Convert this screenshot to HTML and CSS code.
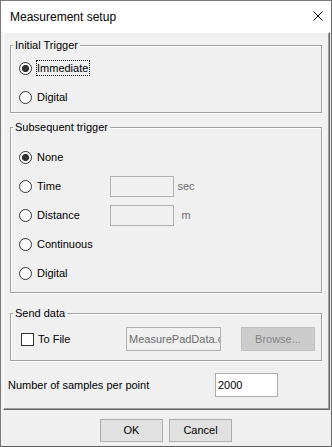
FILE: index.html
```html
<!DOCTYPE html>
<html>
<head>
<meta charset="utf-8">
<link rel="stylesheet" href="styles.css">
</head>
<body>
<div class="window">
  <div class="titlebar">
    <span class="title">Measurement setup</span>
    <svg class="close" width="10" height="10" viewBox="0 0 10 10"><path d="M0.5 0.5 L9.5 9.5 M9.5 0.5 L0.5 9.5" stroke="#000" stroke-width="1" fill="none"/></svg>
  </div>
  <div class="panel">
    <div class="group g-initial">
      <span class="group-title">Initial Trigger</span>
      <div class="row"><input type="radio" class="radio" name="init" checked><span class="lbl focus">Immediate</span></div>
      <div class="row"><input type="radio" class="radio" name="init"><span class="lbl">Digital</span></div>
    </div>
    <div class="group g-subsequent">
      <span class="group-title">Subsequent trigger</span>
      <div class="row"><input type="radio" class="radio" name="sub" checked><span class="lbl">None</span></div>
      <div class="row"><input type="radio" class="radio" name="sub"><span class="lbl lbl-fixed">Time</span><span class="tbox"></span><span class="unit">sec</span></div>
      <div class="row"><input type="radio" class="radio" name="sub"><span class="lbl lbl-fixed">Distance</span><span class="tbox"></span><span class="unit">m</span></div>
      <div class="row"><input type="radio" class="radio" name="sub"><span class="lbl">Continuous</span></div>
      <div class="row"><input type="radio" class="radio" name="sub"><span class="lbl">Digital</span></div>
    </div>
    <div class="group g-send">
      <span class="group-title">Send data</span>
      <div class="row row-send">
        <input type="checkbox" class="check"><span class="lbl lbl-file">To File</span>
        <span class="filebox">MeasurePadData.csv</span>
        <span class="browse">Browse...</span>
      </div>
    </div>
    <div class="samples">
      <span class="samples-lbl">Number of samples per point</span>
      <span class="samples-box">2000</span>
    </div>
  </div>
  <div class="buttons">
    <span class="btn">OK</span>
    <span class="btn">Cancel</span>
  </div>
</div>
</body>
</html>
```
FILE: styles.css
```css
html, body {
  margin: 0;
  padding: 0;
  background: #f0f0f0;
}
body {
  font-family: "Liberation Sans", Arial, sans-serif;
  font-size: 11px;
  color: #000;
}
.window {
  width: 332px;
  height: 447px;
  box-sizing: border-box;
  border: 1px solid #7a7a7a;
  border-bottom-color: #5e5e5e;
  border-right-color: #6a6a6a;
  background: #f0f0f0;
  display: flex;
  flex-direction: column;
}
.titlebar {
  height: 31px;
  flex: none;
  background: #fff;
  display: flex;
  align-items: center;
  justify-content: space-between;
  padding: 0 8px 0 9px;
}
.title {
  font-size: 12px;
  color: #000;
}
.close {
  display: block;
  margin-top: -2px;
}
.panel {
  flex: none;
  height: 378px;
  box-sizing: border-box;
  margin: 0 1px 0 2px;
  border-top: 1px solid #fff;
  border-left: 1px solid #fff;
  border-right: 1px solid #646464;
  border-bottom: 1px solid #646464;
  box-shadow: inset -1px -1px 0 #a0a0a0;
  display: flex;
  flex-direction: column;
}
.group {
  position: relative;
  margin: 0 7px 0 6px;
  border: 1px solid #a0a0a0;
  box-shadow: inset 1px 1px 0 #fff, 1px 1px 0 #fff;
  padding: 0 0 0 8px;
  display: flex;
  flex-direction: column;
  gap: 9px;
}
.group-title {
  position: absolute;
  top: -7px;
  left: 2px;
  line-height: 13px;
  padding: 0 2px;
  background: #f0f0f0;
}
.g-initial {
  margin-top: 12px;
  padding-top: 12px;
  padding-bottom: 5px;
}
.g-subsequent {
  margin-top: 14px;
  padding-top: 19px;
  padding-bottom: 9px;
}
.g-send {
  margin-top: 20px;
  padding-top: 13px;
  padding-bottom: 9px;
}
.row {
  height: 20px;
  display: flex;
  align-items: center;
}
.radio {
  -webkit-appearance: none;
  appearance: none;
  width: 13px;
  height: 13px;
  margin: 0;
  box-sizing: border-box;
  border: 1px solid #333;
  border-radius: 50%;
  background: #fff;
  flex: none;
}
.radio:checked {
  background: radial-gradient(circle, #333 0 3.3px, #fff 3.9px);
}
.lbl {
  margin-left: 5px;
  line-height: 14px;
}
.focus {
  outline: 1px dotted #000;
  outline-offset: 0;
  padding-right: 1px;
}
.lbl-fixed {
  width: 73px;
}
.tbox {
  width: 64px;
  height: 21px;
  box-sizing: border-box;
  border: 1px solid #b0b0b0;
  background: #f0f0f0;
  margin-top: 1px;
}
.unit {
  width: 20px;
  margin-left: 2px;
  text-align: center;
  color: #6d6d6d;
}
.row-send {
  height: 24px;
}
.check {
  -webkit-appearance: none;
  appearance: none;
  width: 13px;
  height: 13px;
  margin: 0 0 0 2px;
  box-sizing: border-box;
  border: 1px solid #333;
  background: #fff;
  flex: none;
}
.lbl-file {
  margin-left: 4px;
  width: 88px;
}
.filebox {
  width: 95px;
  height: 24px;
  box-sizing: border-box;
  border: 1px solid #b0b0b0;
  background: #f0f0f0;
  color: #6d6d6d;
  line-height: 22px;
  padding-left: 2px;
  overflow: hidden;
  white-space: nowrap;
}
.browse {
  margin-left: 20px;
  width: 74px;
  height: 24px;
  box-sizing: border-box;
  border: 1px solid #bfbfbf;
  background: #cccccc;
  color: #838383;
  text-align: center;
  line-height: 22px;
}
.samples {
  margin-top: 12px;
  height: 24px;
  display: flex;
  align-items: center;
  padding-left: 4px;
}
.samples-lbl {
  width: 207px;
}
.samples-box {
  width: 63px;
  height: 24px;
  box-sizing: border-box;
  border: 1px solid #adadad;
  background: #fff;
  line-height: 22px;
  padding-left: 2px;
}
.buttons {
  display: flex;
  justify-content: center;
  gap: 6px;
  padding-top: 9px;
}
.btn {
  width: 63px;
  height: 23px;
  box-sizing: border-box;
  border: 1px solid #adadad;
  background: #e1e1e1;
  text-align: center;
  line-height: 21px;
}
```
